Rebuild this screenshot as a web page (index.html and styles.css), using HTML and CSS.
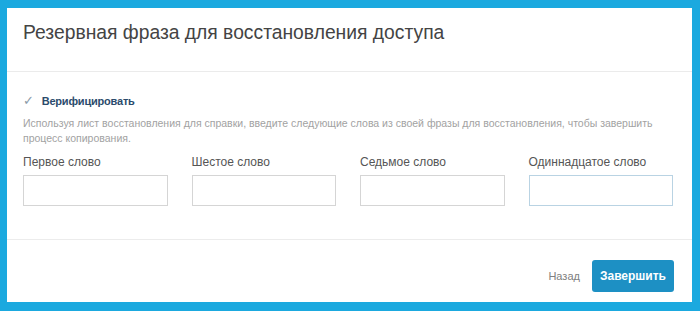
FILE: index.html
```html
<!DOCTYPE html>
<html lang="ru">
	<head>
		<meta charset="utf-8">
		<link rel="stylesheet" href="styles.css">
	</head>
	<body>
		<div class="modal">
			<header class="modal-header">
				<h1>Резервная фраза для восстановления доступа</h1>
			</header>

			<section class="modal-body">
				<p class="verify"><span class="check">&#10003;</span> Верифицировать</p>
				<p class="hint">Используя лист восстановления для справки, введите следующие слова из своей фразы для восстановления, чтобы завершить процесс копирования.</p>
				<form class="words">
					<div class="field">
						<label for="w1">Первое слово</label>
						<input type="text" id="w1">
					</div>
					<div class="field">
						<label for="w6">Шестое слово</label>
						<input type="text" id="w6">
					</div>
					<div class="field">
						<label for="w7">Седьмое слово</label>
						<input type="text" id="w7">
					</div>
					<div class="field">
						<label for="w11">Одиннадцатое слово</label>
						<input type="text" id="w11" class="focused">
					</div>
				</form>
			</section>

			<footer class="modal-footer">
				<a href="#" class="back">Назад</a>
				<button type="button" class="finish">Завершить</button>
			</footer>
		</div>
	</body>
</html>
```

FILE: styles.css
```css
html, body { height: 100%; }
body {
	margin: 0;
	padding: 8px 8px 9px 7px;
	box-sizing: border-box;
	background: #1ba9df;
	font: 13px "Liberation Sans", Arial, sans-serif;
}

.modal { background: #fff; height: 100%; display: flex; flex-direction: column; }

.modal-header { padding: 13px 15px 27px 16px; border-bottom: 1px solid #ebebeb; }
.modal-header h1 { margin: 0; font-size: 19.3px; line-height: 23px; font-weight: normal; color: #444; }

.modal-body { padding: 20px 19px 33px 16px; border-bottom: 1px solid #ececec; }
.verify { margin: 0 0 6px; line-height: 18px; font-size: 11px; letter-spacing: -0.2px; font-weight: bold; color: #2b4b6c; }
.verify .check { color: #8a9aa8; font-weight: normal; font-size: 13px; margin-right: 5px; }
.hint { margin: 0; font-size: 10.5px; line-height: 15px; color: #a2a2a2; }

.words { display: grid; grid-template-columns: repeat(4, 1fr); column-gap: 24px; margin-top: 8px; }
.field label { display: block; font-size: 12px; line-height: 16px; color: #555; margin-bottom: 5px; }
.field input {
	display: block;
	width: 100%;
	height: 31px;
	box-sizing: border-box;
	border: 1px solid #d5d5d5;
	outline: none;
}
.field input.focused { border-color: #b9d3e3; }

.modal-footer { flex: 1; display: flex; justify-content: flex-end; align-items: flex-start; padding: 20px 18px 0; }
.back { color: #808080; text-decoration: none; font-size: 11px; line-height: 32px; margin-right: 12px; }
.finish {
	height: 32px;
	padding: 0 8px;
	border: 0;
	border-radius: 3px;
	background: #1d90c4;
	color: #fff;
	font: bold 12px "Liberation Sans", Arial, sans-serif;
}
```
